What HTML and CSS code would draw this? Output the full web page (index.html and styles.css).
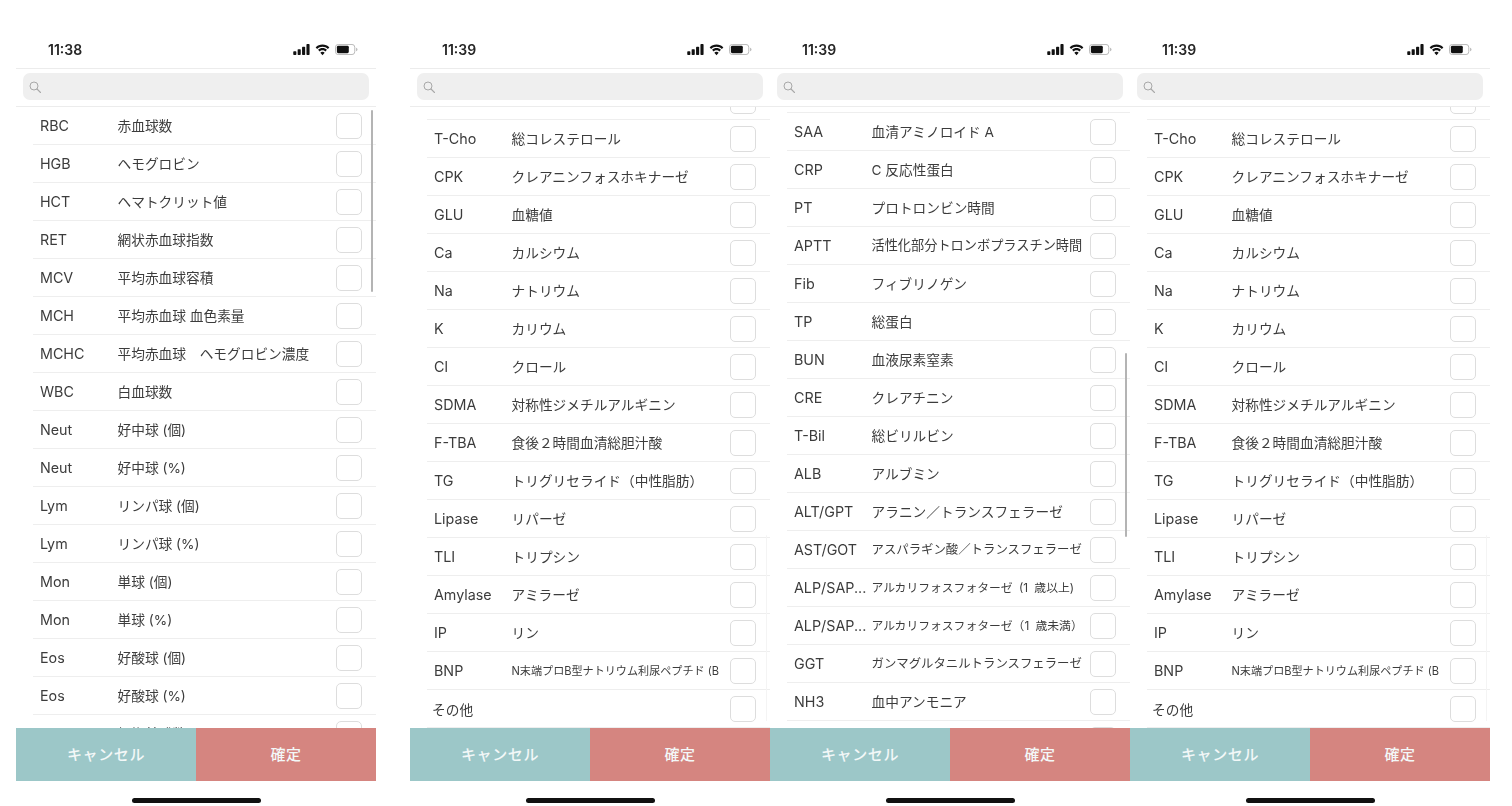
FILE: index.html
```html
<!DOCTYPE html>
<html lang="ja">
<head>
<meta charset="utf-8">
<title>検査項目の選択</title>
<link rel="stylesheet" href="styles.css">
</head>
<body>
<svg class="defs" width="0" height="0" aria-hidden="true">
  <symbol id="i-signal" viewBox="0 0 18 12"><rect x="0" y="8" width="3.400" height="4" rx=".8"/><rect x="4.800" y="5.600" width="3.400" height="6.400" rx=".8"/><rect x="9.600" y="3" width="3.400" height="9" rx=".8"/><rect x="14.400" y="0" width="3.400" height="12" rx=".8"/></symbol>
  <symbol id="i-wifi" viewBox="0 0 16 12"><path d="M8 2.600c2.200 0 4.200.9 5.700 2.300l1.600-1.700C13.400 1.300 10.800.2 8 .2S2.600 1.300.7 3.200l1.600 1.700C3.800 3.500 5.800 2.600 8 2.600z"/><path d="M8 6.300c1.200 0 2.300.5 3.100 1.200l1.600-1.700C11.500 4.600 9.800 3.900 8 3.900s-3.500.7-4.700 1.900l1.600 1.700C5.700 6.800 6.800 6.300 8 6.300z"/><path d="M8 7.900c-.9 0-1.700.4-2.300.9L8 11.700l2.300-2.900c-.6-.5-1.400-.9-2.300-.9z"/></symbol>
  <symbol id="i-battery" viewBox="0 0 25 12"><rect x=".5" y=".5" width="21" height="11" rx="3" fill="none" stroke="#b5b5b5"/><rect x="2" y="2" width="13" height="8" rx="1.500"/><path d="M23 4v4c.9-.3 1.500-1.100 1.500-2s-.6-1.700-1.500-2z" fill="#b5b5b5"/></symbol>
  <symbol id="i-search" viewBox="0 0 12 12"><circle cx="5" cy="5" r="4" fill="none" stroke="currentColor" stroke-width="1"/><path d="M8 8l3.500 3.500" fill="none" stroke="currentColor" stroke-width="1.100" stroke-linecap="round"/></symbol>
</svg>

<main class="screens">

<section class="phone phone--first">
  <header class="status"><span class="time">11:38</span><span class="status-icons"><svg class="ic-signal"><use href="#i-signal"/></svg><svg class="ic-wifi"><use href="#i-wifi"/></svg><svg class="ic-battery"><use href="#i-battery"/></svg></span></header>
  <div class="search-wrap"><div class="search"><svg class="ic-search"><use href="#i-search"/></svg></div></div>
  <div class="list">
    <ul class="rows">
      <li class="row"><span class="label">RBC</span><span class="name">赤血球数</span><i class="box"></i></li>
      <li class="row"><span class="label">HGB</span><span class="name">ヘモグロビン</span><i class="box"></i></li>
      <li class="row"><span class="label">HCT</span><span class="name">ヘマトクリット値</span><i class="box"></i></li>
      <li class="row"><span class="label">RET</span><span class="name">網状赤血球指数</span><i class="box"></i></li>
      <li class="row"><span class="label">MCV</span><span class="name">平均赤血球容積</span><i class="box"></i></li>
      <li class="row"><span class="label">MCH</span><span class="name">平均赤血球 血色素量</span><i class="box"></i></li>
      <li class="row"><span class="label">MCHC</span><span class="name">平均赤血球　ヘモグロビン濃度</span><i class="box"></i></li>
      <li class="row"><span class="label">WBC</span><span class="name">白血球数</span><i class="box"></i></li>
      <li class="row"><span class="label">Neut</span><span class="name">好中球 (個)</span><i class="box"></i></li>
      <li class="row"><span class="label">Neut</span><span class="name">好中球 (%)</span><i class="box"></i></li>
      <li class="row"><span class="label">Lym</span><span class="name">リンパ球 (個)</span><i class="box"></i></li>
      <li class="row"><span class="label">Lym</span><span class="name">リンパ球 (%)</span><i class="box"></i></li>
      <li class="row"><span class="label">Mon</span><span class="name">単球 (個)</span><i class="box"></i></li>
      <li class="row"><span class="label">Mon</span><span class="name">単球 (%)</span><i class="box"></i></li>
      <li class="row"><span class="label">Eos</span><span class="name">好酸球 (個)</span><i class="box"></i></li>
      <li class="row"><span class="label">Eos</span><span class="name">好酸球 (%)</span><i class="box"></i></li>
      <li class="row"><span class="label"></span><span class="name">好塩基球数</span><i class="box"></i></li>
    </ul>
    <div class="scrollbar scrollbar--a"></div>
  </div>
  <footer class="actions"><button class="btn btn--cancel">キャンセル</button><button class="btn btn--ok">確定</button></footer>
  <div class="home"><span class="home-bar"></span></div>
</section>

<section class="phone">
  <header class="status"><span class="time">11:39</span><span class="status-icons"><svg class="ic-signal"><use href="#i-signal"/></svg><svg class="ic-wifi"><use href="#i-wifi"/></svg><svg class="ic-battery"><use href="#i-battery"/></svg></span></header>
  <div class="search-wrap"><div class="search"><svg class="ic-search"><use href="#i-search"/></svg></div></div>
  <div class="list">
    <ul class="rows rows--end">
      <li class="row"><span class="label"></span><span class="name"></span><i class="box"></i></li>
      <li class="row"><span class="label">T-Cho</span><span class="name">総コレステロール</span><i class="box"></i></li>
      <li class="row"><span class="label">CPK</span><span class="name">クレアニンフォスホキナーゼ</span><i class="box"></i></li>
      <li class="row"><span class="label">GLU</span><span class="name">血糖値</span><i class="box"></i></li>
      <li class="row"><span class="label">Ca</span><span class="name">カルシウム</span><i class="box"></i></li>
      <li class="row"><span class="label">Na</span><span class="name">ナトリウム</span><i class="box"></i></li>
      <li class="row"><span class="label">K</span><span class="name">カリウム</span><i class="box"></i></li>
      <li class="row"><span class="label">Cl</span><span class="name">クロール</span><i class="box"></i></li>
      <li class="row"><span class="label">SDMA</span><span class="name">対称性ジメチルアルギニン</span><i class="box"></i></li>
      <li class="row"><span class="label">F-TBA</span><span class="name">食後２時間血清総胆汁酸</span><i class="box"></i></li>
      <li class="row"><span class="label">TG</span><span class="name">トリグリセライド（中性脂肪）</span><i class="box"></i></li>
      <li class="row"><span class="label">Lipase</span><span class="name">リパーゼ</span><i class="box"></i></li>
      <li class="row"><span class="label">TLI</span><span class="name">トリプシン</span><i class="box"></i></li>
      <li class="row"><span class="label">Amylase</span><span class="name">アミラーゼ</span><i class="box"></i></li>
      <li class="row"><span class="label">IP</span><span class="name">リン</span><i class="box"></i></li>
      <li class="row"><span class="label">BNP</span><span class="name name--xs">N末端プロB型ナトリウム利尿ペプチド (B</span><i class="box"></i></li>
      <li class="row row--other"><span class="label">その他</span><span class="name"></span><i class="box"></i></li>
    </ul>
    <div class="scrollbar scrollbar--end"></div>
  </div>
  <footer class="actions"><button class="btn btn--cancel">キャンセル</button><button class="btn btn--ok">確定</button></footer>
  <div class="home"><span class="home-bar"></span></div>
</section>

<section class="phone">
  <header class="status"><span class="time">11:39</span><span class="status-icons"><svg class="ic-signal"><use href="#i-signal"/></svg><svg class="ic-wifi"><use href="#i-wifi"/></svg><svg class="ic-battery"><use href="#i-battery"/></svg></span></header>
  <div class="search-wrap"><div class="search"><svg class="ic-search"><use href="#i-search"/></svg></div></div>
  <div class="list">
    <ul class="rows rows--mid">
      <li class="row"><span class="label"></span><span class="name"></span><i class="box"></i></li>
      <li class="row"><span class="label">SAA</span><span class="name">血清アミノロイド A</span><i class="box"></i></li>
      <li class="row"><span class="label">CRP</span><span class="name">C 反応性蛋白</span><i class="box"></i></li>
      <li class="row"><span class="label">PT</span><span class="name">プロトロンビン時間</span><i class="box"></i></li>
      <li class="row"><span class="label">APTT</span><span class="name name--md">活性化部分トロンボプラスチン時間</span><i class="box"></i></li>
      <li class="row"><span class="label">Fib</span><span class="name">フィブリノゲン</span><i class="box"></i></li>
      <li class="row"><span class="label">TP</span><span class="name">総蛋白</span><i class="box"></i></li>
      <li class="row"><span class="label">BUN</span><span class="name">血液尿素窒素</span><i class="box"></i></li>
      <li class="row"><span class="label">CRE</span><span class="name">クレアチニン</span><i class="box"></i></li>
      <li class="row"><span class="label">T-Bil</span><span class="name">総ビリルビン</span><i class="box"></i></li>
      <li class="row"><span class="label">ALB</span><span class="name">アルブミン</span><i class="box"></i></li>
      <li class="row"><span class="label">ALT/GPT</span><span class="name">アラニン／トランスフェラーゼ</span><i class="box"></i></li>
      <li class="row"><span class="label">AST/GOT</span><span class="name name--sm">アスパラギン酸／トランスフェラーゼ</span><i class="box"></i></li>
      <li class="row"><span class="label">ALP/SAP...</span><span class="name name--alp">アルカリフォスフォターゼ (1 歳以上)</span><i class="box"></i></li>
      <li class="row"><span class="label">ALP/SAP...</span><span class="name name--alp">アルカリフォスフォターゼ（1 歳未満）</span><i class="box"></i></li>
      <li class="row"><span class="label">GGT</span><span class="name name--sm">ガンマグルタニルトランスフェラーゼ</span><i class="box"></i></li>
      <li class="row"><span class="label">NH3</span><span class="name">血中アンモニア</span><i class="box"></i></li>
      <li class="row"><span class="label"></span><span class="name"></span><i class="box"></i></li>
    </ul>
    <div class="scrollbar scrollbar--b"></div>
  </div>
  <footer class="actions"><button class="btn btn--cancel">キャンセル</button><button class="btn btn--ok">確定</button></footer>
  <div class="home"><span class="home-bar"></span></div>
</section>

<section class="phone">
  <header class="status"><span class="time">11:39</span><span class="status-icons"><svg class="ic-signal"><use href="#i-signal"/></svg><svg class="ic-wifi"><use href="#i-wifi"/></svg><svg class="ic-battery"><use href="#i-battery"/></svg></span></header>
  <div class="search-wrap"><div class="search"><svg class="ic-search"><use href="#i-search"/></svg></div></div>
  <div class="list">
    <ul class="rows rows--end">
      <li class="row"><span class="label"></span><span class="name"></span><i class="box"></i></li>
      <li class="row"><span class="label">T-Cho</span><span class="name">総コレステロール</span><i class="box"></i></li>
      <li class="row"><span class="label">CPK</span><span class="name">クレアニンフォスホキナーゼ</span><i class="box"></i></li>
      <li class="row"><span class="label">GLU</span><span class="name">血糖値</span><i class="box"></i></li>
      <li class="row"><span class="label">Ca</span><span class="name">カルシウム</span><i class="box"></i></li>
      <li class="row"><span class="label">Na</span><span class="name">ナトリウム</span><i class="box"></i></li>
      <li class="row"><span class="label">K</span><span class="name">カリウム</span><i class="box"></i></li>
      <li class="row"><span class="label">Cl</span><span class="name">クロール</span><i class="box"></i></li>
      <li class="row"><span class="label">SDMA</span><span class="name">対称性ジメチルアルギニン</span><i class="box"></i></li>
      <li class="row"><span class="label">F-TBA</span><span class="name">食後２時間血清総胆汁酸</span><i class="box"></i></li>
      <li class="row"><span class="label">TG</span><span class="name">トリグリセライド（中性脂肪）</span><i class="box"></i></li>
      <li class="row"><span class="label">Lipase</span><span class="name">リパーゼ</span><i class="box"></i></li>
      <li class="row"><span class="label">TLI</span><span class="name">トリプシン</span><i class="box"></i></li>
      <li class="row"><span class="label">Amylase</span><span class="name">アミラーゼ</span><i class="box"></i></li>
      <li class="row"><span class="label">IP</span><span class="name">リン</span><i class="box"></i></li>
      <li class="row"><span class="label">BNP</span><span class="name name--xs">N末端プロB型ナトリウム利尿ペプチド (B</span><i class="box"></i></li>
      <li class="row row--other"><span class="label">その他</span><span class="name"></span><i class="box"></i></li>
    </ul>
    <div class="scrollbar scrollbar--end"></div>
  </div>
  <footer class="actions"><button class="btn btn--cancel">キャンセル</button><button class="btn btn--ok">確定</button></footer>
  <div class="home"><span class="home-bar"></span></div>
</section>

</main>
</body>
</html>
```

FILE: styles.css
```css
* { box-sizing: border-box; }

html, body {
  margin: 0;
  height: 806px;
  overflow: hidden;
  background: #fff;
}

body {
  color: #3c3c3c;
  font-family: "Inter", "Noto Sans CJK JP", sans-serif;
}

.defs { position: absolute; }

.screens {
  display: flex;
  padding-left: 16px;
}

.phone {
  position: relative;
  display: flex;
  flex-direction: column;
  flex: none;
  width: 360px;
  height: 806px;
  filter: blur(0.5px);
}

.phone--first { margin-right: 34px; }

.status {
  display: flex;
  align-items: center;
  justify-content: space-between;
  height: 69px;
  padding: 31px 18px 0 32px;
  border-bottom: 1px solid #ececec;
}

.time {
  font-size: 14px;
  font-weight: 600;
  color: #262626;
}

.status-icons {
  display: flex;
  align-items: center;
  gap: 5px;
  color: #111;
  fill: #111;
}

.ic-signal { width: 17px; height: 11px; }
.ic-wifi { width: 15px; height: 12px; }
.ic-battery { width: 23px; height: 11px; }

.search-wrap {
  height: 38px;
  padding: 4px 7px 6px;
  border-bottom: 1px solid #ececec;
}

.search {
  display: flex;
  align-items: center;
  height: 27px;
  padding-left: 6px;
  border-radius: 7px;
  background: #efefef;
}

.ic-search {
  width: 12px;
  height: 12px;
  color: #a8a8a8;
}

.list {
  position: relative;
  flex: 1;
  min-height: 0;
  overflow: hidden;
}

.rows {
  list-style: none;
  margin: 0;
  padding: 0;
}

.rows--end { margin-top: -25px; }
.rows--mid { margin-top: -32px; }

.row {
  display: flex;
  align-items: center;
  height: 38px;
  margin-left: 17px;
  padding-left: 7px;
  padding-right: 14px;
  border-bottom: 1px solid #eeeeee;
}

.label {
  flex: none;
  width: 77.500px;
  font-size: 14.300px;
  white-space: nowrap;
}

.row--other .label {
  margin-left: -2px;
  width: 79.500px;
  font-size: 13.700px;
}

.name {
  flex: 1;
  min-width: 0;
  padding-bottom: 2px;
  font-size: 13.700px;
  white-space: nowrap;
  overflow: hidden;
}

.name--md { font-size: 13.200px; }
.name--sm { font-size: 12.400px; }
.name--alp { font-size: 11.800px; word-spacing: 3px; }
.name--xs { font-size: 11.100px; }

.box {
  flex: none;
  width: 26px;
  height: 26px;
  margin-left: 4px;
  border: 1px solid #dddddd;
  border-radius: 5px;
  background: #fff;
}

.scrollbar {
  position: absolute;
  right: 3px;
  width: 2.500px;
  border-radius: 2px;
  background: #b4b4b4;
}

.scrollbar--a { top: 3px; height: 182px; }
.scrollbar--b { top: 246px; height: 184px; }
.scrollbar--end { top: 428px; height: 186px; width: 1.500px; background: #f4f4f4; }

.actions {
  display: flex;
  flex: none;
  height: 53px;
}

.btn {
  flex: 1;
  border: 0;
  padding: 0 0 2px;
  font-family: inherit;
  font-size: 15px;
  font-weight: 500;
  letter-spacing: 0.6px;
  color: #f3f8f8;
}

.btn--cancel { background: #9cc7c8; }
.btn--ok { background: #d58580; }

.home {
  display: flex;
  justify-content: center;
  flex: none;
  height: 25px;
  padding-top: 17px;
}

.home-bar {
  width: 129px;
  height: 5px;
  border-radius: 3px;
  background: #111;
}
```
